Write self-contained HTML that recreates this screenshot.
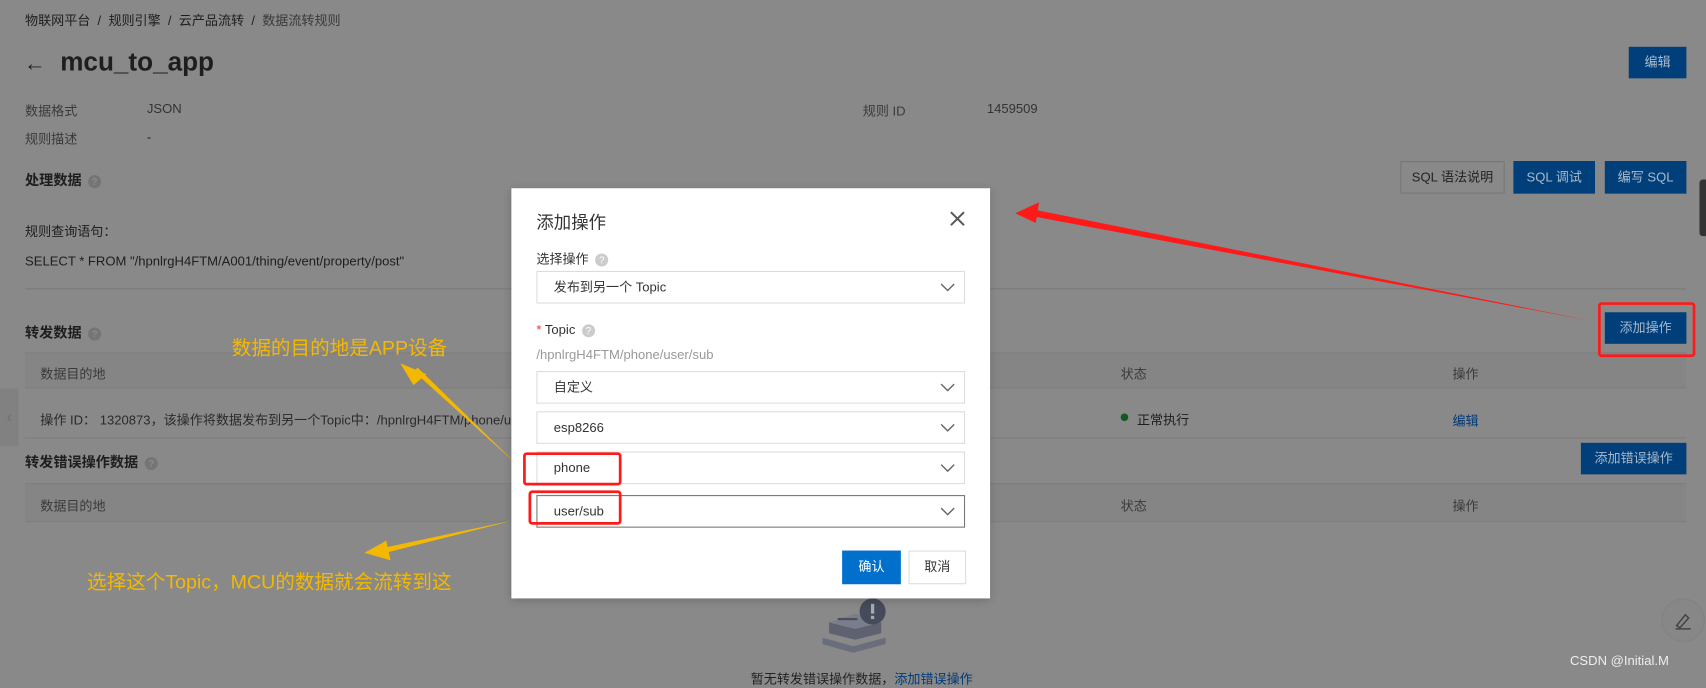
<!DOCTYPE html><html><head><meta charset="utf-8"><style>
*{margin:0;padding:0;box-sizing:border-box}
html,body{width:1706px;height:677px;overflow:hidden;background:#898989}
#w{position:absolute;left:0;top:0;width:1568px;height:622px;transform:scale(1.08801);transform-origin:0 0;font-family:"Liberation Sans","Noto Sans CJK SC",sans-serif;font-size:12px;color:#1e1e1e;background:#898989}
.a{position:absolute;white-space:nowrap}
.lb{color:#3a3a3a}
.btn{position:absolute;background:#003f7a;color:#a9b9cc;text-align:center;font-size:12px}
.q{display:inline-block;width:12px;height:12px;border-radius:50%;background:#757575;color:#8a8a8a;font-size:9px;text-align:center;line-height:12px;vertical-align:middle;margin-left:6px}
.sel{position:absolute;left:23px;width:394px;height:30px;border:1px solid #ddd;padding-left:15px;line-height:28px;font-size:12px;color:#333}
.sel svg{position:absolute;right:8px;top:9px}
</style></head><body><div id="w">
<div class="a" style="left:23px;top:10px">物联网平台 &nbsp;/&nbsp; 规则引擎 &nbsp;/&nbsp; 云产品流转 &nbsp;/&nbsp; <span class="lb">数据流转规则</span></div>
<div class="a" style="left:22px;top:44px;font-size:24px;font-weight:bold"><span style="font-size:20px">←</span>&nbsp; mcu_to_app</div>
<div class="btn" style="left:1497px;top:43px;width:53px;height:29px;line-height:29px">编辑</div>
<div class="a lb" style="left:23px;top:93px">数据格式</div><div class="a" style="left:135px;top:93px;color:#333">JSON</div>
<div class="a lb" style="left:793px;top:93px">规则 ID</div><div class="a" style="left:907px;top:93px;color:#333">1459509</div>
<div class="a lb" style="left:23px;top:119px">规则描述</div><div class="a" style="left:135px;top:119px">-</div>
<div class="a" style="left:23px;top:155px;font-size:13px;font-weight:bold">处理数据<span class="q">?</span></div>
<div class="a" style="left:1287px;top:148px;width:96px;height:30px;border:1px solid #777;text-align:center;line-height:28px;color:#222">SQL 语法说明</div>
<div class="btn" style="left:1391px;top:148px;width:75px;height:30px;line-height:30px">SQL 调试</div>
<div class="btn" style="left:1475px;top:148px;width:75px;height:30px;line-height:30px">编写 SQL</div>
<div class="a" style="left:23px;top:204px">规则查询语句：</div>
<div class="a" style="left:23px;top:233px">SELECT * FROM "/hpnlrgH4FTM/A001/thing/event/property/post"</div>
<div class="a" style="left:23px;top:265px;width:1527px;height:1px;background:#7a7a7a"></div>
<div class="a" style="left:23px;top:295px;font-size:13px;font-weight:bold">转发数据<span class="q">?</span></div>
<div class="btn" style="left:1475px;top:287px;width:75px;height:29px;line-height:29px">添加操作</div>
<div class="a" style="left:23px;top:324px;width:1527px;height:33px;background:#858585;border-top:1px solid #7d7d7d;border-bottom:1px solid #7d7d7d"></div>
<div class="a lb" style="left:37px;top:335px">数据目的地</div><div class="a lb" style="left:1030px;top:335px">状态</div><div class="a lb" style="left:1335px;top:335px">操作</div>
<div class="a" style="left:37px;top:377px;color:#2a2a2a">操作 ID： 1320873，该操作将数据发布到另一个Topic中：/hpnlrgH4FTM/phone/user/sub</div>
<div class="a" style="left:1030px;top:380px;width:7px;height:7px;border-radius:50%;background:#0d5a22"></div>
<div class="a" style="left:1045px;top:377px">正常执行</div><div class="a" style="left:1335px;top:378px;color:#003a78">编辑</div>
<div class="a" style="left:23px;top:402px;width:1527px;height:1px;background:#7d7d7d"></div>
<div class="a" style="left:0;top:357px;width:17px;height:53px;background:#818181;color:#6e6e6e;font-size:14px;line-height:53px;text-align:center">‹</div>
<div class="a" style="left:23px;top:414px;font-size:13px;font-weight:bold">转发错误操作数据<span class="q">?</span></div>
<div class="btn" style="left:1453px;top:407px;width:97px;height:29px;line-height:29px">添加错误操作</div>
<div class="a" style="left:23px;top:444px;width:1527px;height:36px;background:#858585;border-top:1px solid #7d7d7d;border-bottom:1px solid #7d7d7d"></div>
<div class="a lb" style="left:37px;top:456px">数据目的地</div><div class="a lb" style="left:1030px;top:456px">状态</div><div class="a lb" style="left:1335px;top:456px">操作</div>
<svg class="a" style="left:748px;top:550px" width="72" height="62"><polygon points="8,42 36,50 66,42 66,36 36,44 8,36" fill="#6a6e7c"/><polygon points="14,32 38,38 62,32 62,22 38,28 14,22" fill="#5e6270"/><polygon points="14,22 38,28 62,22 38,14" fill="#7a7e8c"/><rect x="22" y="18" width="18" height="2" fill="#4a4e5a"/><circle cx="54" cy="12" r="12" fill="#454b5a"/><rect x="52.5" y="5" width="3" height="9" fill="#aaa"/><rect x="52.5" y="16" width="3" height="3" fill="#aaa"/></svg>
<div class="a" style="left:690px;top:615px;color:#222">暂无转发错误操作数据，<span style="color:#003a78">添加错误操作</span></div>
<div class="a" style="left:1527px;top:550px;width:40px;height:40px;border-radius:50%;background:#878787;border:1px solid #828282"></div>
<svg class="a" style="left:1537px;top:560px" width="20" height="20"><path d="M4 15 L12 5 L15 8 L7 17 Z M3 18 H17" stroke="#444" stroke-width="1.4" fill="none"/></svg>
<div class="a" style="left:1443px;top:600px;color:#eee;font-size:12px">CSDN @Initial.M</div>
<div class="a" style="left:1562px;top:165px;width:6px;height:52px;background:#333;border-radius:3px 0 0 3px"></div>

<div class="a" style="left:470px;top:173px;width:440px;height:377px;background:#fff;box-shadow:0 2px 8px rgba(0,0,0,.2)">
<div class="a" style="left:23px;top:18px;font-size:16px;color:#333">添加操作</div>
<svg class="a" style="left:402px;top:20px" width="16" height="16"><path d="M2 2L14 14M14 2L2 14" stroke="#555" stroke-width="1.8"/></svg>
<div class="a" style="left:23px;top:56px;color:#333">选择操作<span class="q" style="background:#ccc;color:#fff">?</span></div>
<div class="sel" style="top:76px">发布到另一个 Topic<svg width="14" height="10"><path d="M1 2L7 8L13 2" stroke="#666" stroke-width="1.3" fill="none"/></svg></div>
<div class="a" style="left:23px;top:123px;color:#333"><span style="color:#e33">*</span> Topic<span class="q" style="background:#ccc;color:#fff">?</span></div>
<div class="a" style="left:23px;top:146px;color:#999">/hpnlrgH4FTM/phone/user/sub</div>
<div class="sel" style="top:168px">自定义<svg width="14" height="10"><path d="M1 2L7 8L13 2" stroke="#666" stroke-width="1.3" fill="none"/></svg></div>
<div class="sel" style="top:205px">esp8266<svg width="14" height="10"><path d="M1 2L7 8L13 2" stroke="#666" stroke-width="1.3" fill="none"/></svg></div>
<div class="sel" style="top:242px">phone<svg width="14" height="10"><path d="M1 2L7 8L13 2" stroke="#666" stroke-width="1.3" fill="none"/></svg></div>
<div class="sel" style="top:282px;border-color:#777">user/sub<svg width="14" height="10"><path d="M1 2L7 8L13 2" stroke="#666" stroke-width="1.3" fill="none"/></svg></div>
<div class="a" style="left:304px;top:333px;width:54px;height:31px;background:#0070cc;color:#fff;text-align:center;line-height:31px">确认</div>
<div class="a" style="left:365px;top:333px;width:53px;height:31px;border:1px solid #ddd;text-align:center;line-height:29px;color:#333">取消</div>
</div>

<div class="a" style="left:213px;top:306px;font-size:18px;color:#f5b800">数据的目的地是APP设备</div>
<div class="a" style="left:80px;top:521px;font-size:18px;color:#f5b800">选择这个Topic，MCU的数据就会流转到这</div>
<svg class="a" style="left:0;top:0" width="1568" height="622">
<g fill="none" stroke="#ff1a1a" stroke-width="2.5"><rect x="1470" y="279" width="87" height="48" rx="2"/><rect x="482" y="417" width="88" height="28" rx="2"/><rect x="487" y="452" width="83" height="29" rx="2"/></g>
<polygon points="1463,295 950,199 952,193" fill="#ff1a1a"/><polygon points="933,196 955,186 952,205" fill="#ff1a1a"/>
<polygon points="473,425 380,341 384,338" fill="#f5b800"/><polygon points="368,334 392,344 380,354" fill="#f5b800"/>
<polygon points="473,478 350,504 351,509" fill="#f5b800"/><polygon points="335,508 355,497 359,515" fill="#f5b800"/>
</svg>
</div></body></html>
